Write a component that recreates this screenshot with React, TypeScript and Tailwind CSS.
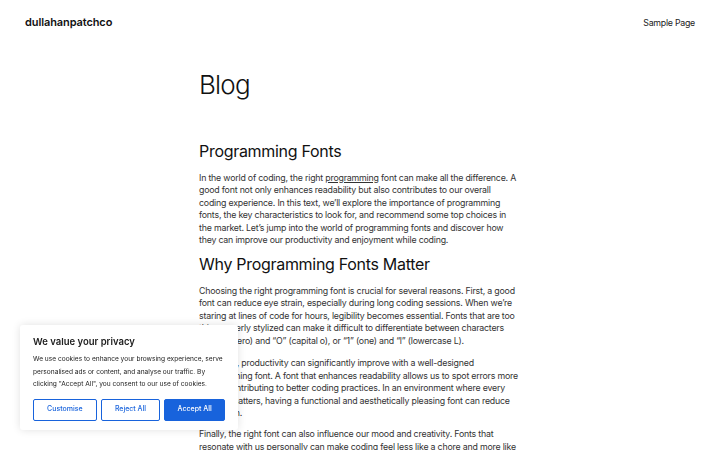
import React from 'react';

const font = { fontFamily: 'Inter, "Noto Sans", sans-serif' };

export default function App() {
  return (
    <div className="relative min-h-[450px] bg-white text-[#111]" style={font}>
      {/* Header */}
      <header className="flex items-center justify-between px-[25px] pt-[10px] h-[35px]">
        <a className="text-[11px] font-semibold tracking-[-0.1px] text-[#111]">dullahanpatchco</a>
        <a className="text-[8.8px] tracking-[-0.25px] text-[#222]">Sample Page</a>
      </header>

      {/* Content */}
      <main className="mx-auto w-[322px] pt-[32px] pb-10">
        <h1 className="text-[26px] font-light leading-[36px] tracking-[-0.8px]">Blog</h1>

        <h2 className="mt-[36px] text-[16px] font-normal leading-[24px] tracking-[-0.3px]">Programming Fonts</h2>
        <p className="mt-[8.5px] pr-[3px] text-[8.8px] leading-[12.6px] tracking-[-0.2px] text-[#333]">
          In the world of coding, the right <a className="underline">programming</a> font can make all the difference. A
          good font not only enhances readability but also contributes to our overall coding experience. In this text,
          we’ll explore the importance of programming fonts, the key characteristics to look for, and recommend some top
          choices in the market. Let’s jump into the world of programming fonts and discover how they can improve our
          productivity and enjoyment while coding.
        </p>

        <h2 className="mt-[5px] text-[16px] font-normal leading-[24px] tracking-[-0.3px]">Why Programming Fonts Matter</h2>
        <p className="mt-[8.5px] pr-[3px] text-[8.8px] leading-[12.6px] tracking-[-0.2px] text-[#333]">
          Choosing the right programming font is crucial for several reasons. First, a good font can reduce eye strain,
          especially during long coding sessions. When we’re staring at lines of code for hours, legibility becomes
          essential. Fonts that are too thin or overly stylized can make it difficult to differentiate between characters
          like “0” (zero) and “O” (capital o), or “1” (one) and “l” (lowercase L).
        </p>
        <p className="mt-[9.5px] pr-[3px] text-[8.8px] leading-[12.6px] tracking-[-0.2px] text-[#333]">
          Moreover, productivity can significantly improve with a well-designed programming font. A font that enhances
          readability allows us to spot errors more easily, contributing to better coding practices. In an environment
          where every second matters, having a functional and aesthetically pleasing font can reduce frustration.
        </p>
        <p className="mt-[8px] pr-[3px] text-[8.8px] leading-[12.6px] tracking-[-0.2px] text-[#333]">
          Finally, the right font can also influence our mood and creativity. Fonts that resonate with us personally can
          make coding feel less like a chore and more like an art form, inspiring us to write cleaner code.
        </p>
      </main>

      {/* Cookie banner */}
      <div className="fixed left-[20px] top-[325px] w-[218px] h-[105px] bg-white rounded-[3px] shadow-[0_0_8px_rgba(0,0,0,0.12)] px-[13px] pt-[10px]">
        <p className="text-[9.5px] font-semibold leading-[14px] text-[#212121]">We value your privacy</p>
        <p className="mt-[4px] text-[6.6px] leading-[12.5px] text-[#212121]">
          We use cookies to enhance your browsing experience, serve personalised ads or content, and analyse our traffic.
          By clicking "Accept All", you consent to our use of cookies.
        </p>
        <div className="mt-[8px] flex gap-[4px]">
          <button className="w-[64px] h-[22px] border-[1.5px] border-[#1863dc] rounded-[2px] text-[7px] font-medium text-[#1863dc]">
            Customise
          </button>
          <button className="w-[60px] h-[22px] border-[1.5px] border-[#1863dc] rounded-[2px] text-[7px] font-medium text-[#1863dc]">
            Reject All
          </button>
          <button className="w-[61px] h-[22px] border-[1.5px] border-[#1863dc] bg-[#1863dc] rounded-[2px] text-[7px] font-medium text-white">
            Accept All
          </button>
        </div>
      </div>
    </div>
  );
}
